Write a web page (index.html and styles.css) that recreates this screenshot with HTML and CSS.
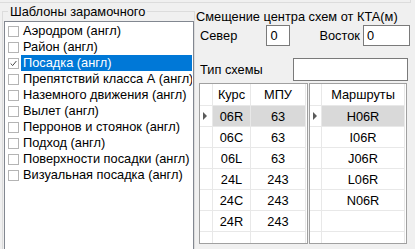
FILE: index.html
```html
<!DOCTYPE html>
<html>
<head>
    <meta charset="utf-8">
    <title>Шаблоны зарамочного</title>
    <link rel="stylesheet" href="styles.css">
</head>
<body>

<div class="top-edge"></div>

<div class="main">
    <fieldset class="templates">
        <legend>Шаблоны зарамочного</legend>
        <ul class="list">
            <li><span class="check"></span><span class="name">Аэродром (англ)</span></li>
            <li><span class="check"></span><span class="name">Район (англ)</span></li>
            <li class="sel"><span class="check on"><svg viewBox="0 0 11 11"><path d="M2 5.5 L4.5 8 L9 2.5"/></svg></span><span class="name">Посадка (англ)</span></li>
            <li><span class="check"></span><span class="name">Препятствий класса А (англ)</span></li>
            <li><span class="check"></span><span class="name">Наземного движения (англ)</span></li>
            <li><span class="check"></span><span class="name">Вылет (англ)</span></li>
            <li><span class="check"></span><span class="name">Перронов и стоянок (англ)</span></li>
            <li><span class="check"></span><span class="name">Подход (англ)</span></li>
            <li><span class="check"></span><span class="name">Поверхности посадки (англ)</span></li>
            <li><span class="check"></span><span class="name">Визуальная посадка (англ)</span></li>
        </ul>
    </fieldset>

    <div class="offset">
        <div class="caption">Смещение центра схем от КТА(м)</div>
        <div class="coords">
            <label class="north-l">Север</label><input class="north" value="0">
            <label class="east-l">Восток</label><input class="east" value="0">
        </div>
        <div class="scheme">
            <label>Тип схемы</label><input class="scheme-in" value="">
        </div>
        <div class="grids">
            <div class="grid runways">
                <table>
                    <colgroup><col class="rh"><col class="c-course"><col class="c-mpu"></colgroup>
                    <tr class="head"><th></th><th>Курс</th><th>МПУ</th></tr>
                    <tr class="cur"><td class="mark"></td><td>06R</td><td>63</td></tr>
                    <tr><td></td><td>06C</td><td>63</td></tr>
                    <tr><td></td><td>06L</td><td>63</td></tr>
                    <tr><td></td><td>24L</td><td>243</td></tr>
                    <tr><td></td><td>24C</td><td>243</td></tr>
                    <tr><td></td><td>24R</td><td>243</td></tr>
                    <tr><td></td><td></td><td></td></tr>
                </table>
            </div>
            <div class="grid routes">
                <table>
                    <colgroup><col class="rh2"><col class="c-route"></colgroup>
                    <tr class="head"><th></th><th>Маршруты</th></tr>
                    <tr class="cur"><td class="mark"></td><td>H06R</td></tr>
                    <tr><td></td><td>I06R</td></tr>
                    <tr><td></td><td>J06R</td></tr>
                    <tr><td></td><td>L06R</td></tr>
                    <tr><td></td><td>N06R</td></tr>
                    <tr><td></td><td></td></tr>
                    <tr><td></td><td></td></tr>
                </table>
            </div>
        </div>
    </div>
</div>

</body>
</html>
```

FILE: styles.css
```css
body {
    margin: 0;
    background: #f0f0f0;
    font-family: "Liberation Sans", Arial, sans-serif;
    font-size: 12.8px;
    color: #000;
    overflow: hidden;
    width: 415px;
    height: 249px;
}

.top-edge {
    width: 410px;
    height: 2px;
    border-bottom: 1px solid #dcdcdc;
    border-right: 1px solid #dcdcdc;
}

.main {display: flex;}

/* left group */
.templates {
    margin: 0 0 0 2px;
    padding: 0 0 0 1px;
    width: 190px;
    border: 1px solid #dcdcdc;
    min-width: 0;
}
.templates legend {
    margin: 1px 0 0 4px;
    padding: 0 2px;
    line-height: 17px;
}
.list {
    list-style: none;
    margin: 1px 0 0 0;
    padding: 1px 0 0 0;
    height: 240px;
    background: #fff;
    border: 1px solid #828790;
    overflow: hidden;
}
.list li {
    display: flex;
    align-items: center;
    height: 16px;
    white-space: nowrap;
}
.check {
    flex: none;
    width: 9px;
    height: 9px;
    margin: 0 2px 0 3px;
    border: 1px solid #b4b4b4;
    background: #fff;
    display: flex;
}
.check svg {width: 9px; height: 9px;}
.check svg path {fill: none; stroke: #444; stroke-width: 1.2;}
.name {
    padding-left: 2px;
    line-height: 16px;
    overflow: hidden;
    flex: 1;
    margin-right: 1px;
}
.sel .name {background: #0078d7; color: #fff;}

/* right side */
.offset {
    margin-left: 1px;
    padding-top: 6px;
    width: 214px;
}
.caption {
    line-height: 16px;
    white-space: nowrap;
}
.coords, .scheme {
    display: flex;
    align-items: center;
    padding-left: 4px;
}
.coords {margin-top: 0;}
.scheme {margin-top: 12px;}
input {
    box-sizing: border-box;
    margin: 0;
    height: 21px;
    border: 1px solid #7a7a7a;
    background: #fff;
    font: inherit;
    padding: 0 3px;
    outline: none;
}
.north-l {width: 67px;}
.north {width: 24px;}
.east-l {margin-left: 29px; width: 44px;}
.east {width: 47px;}
.scheme label {width: 93px;}
.scheme-in {width: 115px; height: 23px;}

.grids {
    display: flex;
    gap: 1px;
    margin: 2px 0 0 3px;
}
.grid {
    box-sizing: border-box;
    height: 161px;
    border: 1px solid #a0a0a0;
    background: #fff;
    overflow: hidden;
}
.runways {width: 109px;}
.routes {width: 98px;}
.grid table {
    border-collapse: separate;
    border-spacing: 0;
    table-layout: fixed;
}
.rh {width: 13px;}
.c-course {width: 38px;}
.c-mpu {width: 55px;}
.rh2 {width: 12px;}
.c-route {width: 83px;}
.grid th, .grid td {
    box-sizing: border-box;
    padding: 0;
    text-align: center;
    font-weight: normal;
    border-right: 1px solid #e8e8e8;
    border-bottom: 1px solid #e8e8e8;
    white-space: nowrap;
}
.grid th {height: 22px;}
.grid td {height: 21px;}
.cur td {background: #d9d9d9;}
.cur td.mark {background: #fff; position: relative;}
.mark::before {
    content: "";
    position: absolute;
    left: 3px;
    top: 6px;
    border-left: 4px solid #5a5a5a;
    border-top: 4px solid transparent;
    border-bottom: 4px solid transparent;
}
```
